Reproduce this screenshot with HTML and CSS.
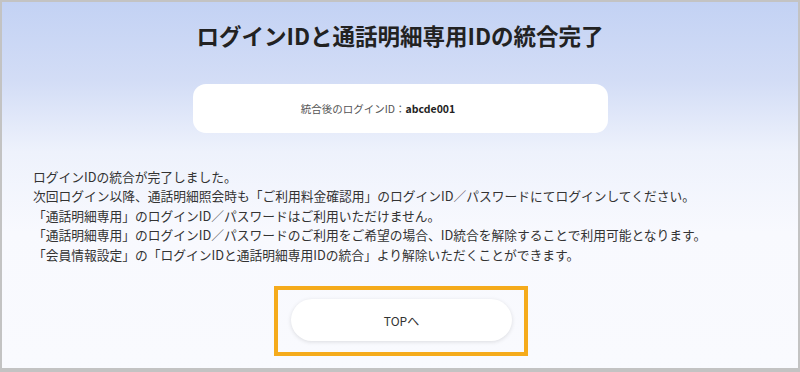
FILE: index.html
```html
<!DOCTYPE html>
<html lang="ja">
  <head>
    <meta charset="UTF-8" />
    <meta name="viewport" content="width=device-width, initial-scale=1.0" />
    <title>ログインIDと通話明細専用IDの統合完了</title>
    <link rel="stylesheet" href="styles.css">
  </head>
  <body>
    <div class="frame">
      <h1 class="page-title">ログインIDと通話明細専用IDの統合完了</h1>

      <div class="id-card">
        <span class="id-label">統合後のログインID：</span><span class="id-value">abcde001</span>
      </div>

      <div class="message">
        <p>ログインIDの統合が完了しました。</p>
        <p>次回ログイン以降、通話明細照会時も「ご利用料金確認用」のログインID／パスワードにてログインしてください。</p>
        <p>「通話明細専用」のログインID／パスワードはご利用いただけません。</p>
        <p>「通話明細専用」のログインID／パスワードのご利用をご希望の場合、ID統合を解除することで利用可能となります。</p>
        <p>「会員情報設定」の「ログインIDと通話明細専用IDの統合」より解除いただくことができます。</p>
      </div>

      <div class="top-area">
        <div class="highlight">
          <button class="top-button" onclick="goTop()">TOPへ</button>
        </div>
      </div>
    </div>

    <script>
      function goTop() {
        window.location.href = "index.html"; // back to top page
      }
    </script>
  </body>
</html>
```

FILE: styles.css
```css
body {
  margin: 0;
  font-family: "Noto Sans CJK JP", "Noto Sans", sans-serif;
  color: #333;
}

.frame {
  box-sizing: border-box;
  height: 372px;
  border: 2px solid #c3c3c3;
  border-bottom-width: 4px;
  background: linear-gradient(
    to bottom,
    #c3d2f4 0px,
    #d3ddf6 80px,
    #eef2fc 150px,
    #f8f9fe 230px,
    #f9fafe 100%
  );
  overflow: hidden;
}

.page-title {
  margin: 0;
  padding-top: 16px;
  font-size: 22.5px;
  line-height: 34px;
  font-weight: 700;
  color: #222;
  text-align: center;
}

.id-card {
  box-sizing: border-box;
  width: 415px;
  height: 49px;
  margin: 32px auto 0;
  padding-right: 44px; /* label sits a little left of centre */
  background-color: #fff;
  border-radius: 13px;
  display: flex;
  align-items: center;
  justify-content: center;
  font-size: 10.5px;
}
.id-label {
  color: #555;
}
.id-value {
  color: #222;
  font-weight: 700;
}

.message {
  margin-top: 34px;
  padding-left: 31px;
  font-size: 12.75px;
  line-height: 19.4px;
  color: #333;
}
.message p {
  margin: 0;
}

.top-area {
  display: flex;
  justify-content: center;
  margin-top: 22px;
  padding-left: 2px;
}
.highlight {
  border: 4px solid #f5ab1c;
  padding: 9px 12px 11px 13px;
}
.top-button {
  display: block;
  width: 221px;
  height: 42px;
  border: none;
  border-radius: 21px;
  background-color: #fff;
  box-shadow: 0 1px 4px rgba(0, 0, 0, 0.12);
  font-family: inherit;
  font-size: 12px;
  color: #333;
  cursor: pointer;
}
```
